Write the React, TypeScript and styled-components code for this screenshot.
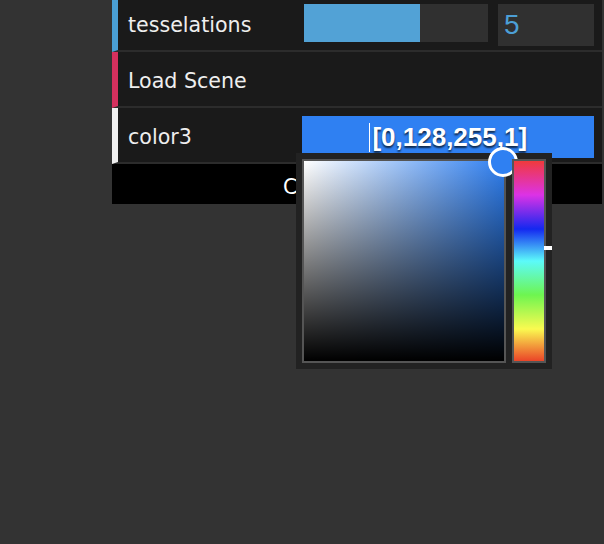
import React from "react";
import styled, { createGlobalStyle } from "styled-components";

const Global = createGlobalStyle`
  html, body { margin: 0; padding: 0; }
  body {
    background: #333333;
    min-height: 544px;
    overflow: hidden;
    font-family: "DejaVu Sans", "Liberation Sans", sans-serif;
  }
`;

const Panel = styled.div`
  margin-left: 112px;
  margin-top: -4px;
  width: 490px;
  background: #1a1a1a;
`;

const Row = styled.div<{ $accent: string }>`
  display: flex;
  align-items: flex-start;
  height: 54px;
  padding: 0 8px 0 10px;
  border-left: 6px solid ${(p) => p.$accent};
  border-bottom: 2px solid #2c2c2c;
`;

const Label = styled.div`
  flex: none;
  width: 174px;
  padding-top: 4px;
  line-height: 50px;
  font-size: 20.6px;
  color: #eeeeee;
  white-space: nowrap;
`;

const Control = styled.div`
  position: relative;
  flex: none;
  width: 292px;
  padding-top: 8px;
  display: flex;
  align-items: flex-start;
  gap: 10px;
`;

const Slider = styled.div`
  margin-left: 2px;
  width: 184px;
  height: 38px;
  background: #303030;
`;

const SliderFill = styled.div`
  height: 100%;
  background: #52a2d6;
`;

const NumberBox = styled.div`
  box-sizing: border-box;
  width: 96px;
  height: 42px;
  padding-left: 6px;
  background: #303030;
  color: #4c9fd6;
  font-family: "Liberation Sans", Arial, sans-serif;
  font-size: 28px;
  line-height: 42px;
`;

const ColorField = styled.div`
  width: 292px;
  height: 42px;
  background: #2f80f2;
  color: #ffffff;
  font-family: "Liberation Sans", Arial, sans-serif;
  font-size: 26px;
  font-weight: bold;
  line-height: 42px;
  text-align: center;
  text-shadow: rgba(0, 0, 0, 0.7) 0 2px 2px;
  white-space: nowrap;
`;

const Caret = styled.span`
  display: inline-block;
  width: 1.5px;
  height: 29px;
  margin-right: 2px;
  background: #ffffff;
  vertical-align: -6px;
`;

const Picker = styled.div`
  position: absolute;
  left: -6px;
  top: 45px;
  z-index: 10;
  display: flex;
  gap: 6px;
  padding: 6px;
  background: #222222;
`;

const SatField = styled.div`
  position: relative;
  width: 200px;
  height: 200px;
  border: 2px solid #555555;
  background: linear-gradient(to bottom, rgba(0, 0, 0, 0) 0%, #000000 100%),
    linear-gradient(to right, #ffffff 0%, #2f7ff0 100%);
`;

const FieldKnob = styled.div`
  position: absolute;
  box-sizing: border-box;
  left: 184px;
  top: -14px;
  width: 30px;
  height: 30px;
  border: 3px solid #ffffff;
  border-radius: 50%;
  background: #2f80f2;
`;

const HueBar = styled.div`
  position: relative;
  width: 30px;
  height: 200px;
  border: 2px solid #555555;
  background: linear-gradient(
    to bottom,
    #f03a3c 0%,
    #dc32e6 17%,
    #1428f0 34%,
    #5cfafa 50%,
    #6ef550 67%,
    #fafa50 84%,
    #ea4428 100%
  );
`;

const HueKnob = styled.div`
  position: absolute;
  left: 30px;
  top: 85px;
  width: 8px;
  height: 4px;
  background: #ffffff;
`;

const CloseBar = styled.div`
  box-sizing: border-box;
  height: 40px;
  padding-top: 6px;
  line-height: 34px;
  background: #000000;
  color: #ffffff;
  font-size: 20.6px;
  text-align: center;
`;

export default function App() {
  return (
    <>
      <Global />
      <Panel>
        <Row $accent="#4a9fd5">
          <Label>tesselations</Label>
          <Control>
            <Slider>
              <SliderFill style={{ width: "63%" }} />
            </Slider>
            <NumberBox>5</NumberBox>
          </Control>
        </Row>
        <Row $accent="#d5305e">
          <Label>Load Scene</Label>
        </Row>
        <Row $accent="#efefef">
          <Label>color3</Label>
          <Control>
            <ColorField>
              <Caret />
              [0,128,255,1]
            </ColorField>
            <Picker>
              <SatField>
                <FieldKnob />
              </SatField>
              <HueBar>
                <HueKnob />
              </HueBar>
            </Picker>
          </Control>
        </Row>
        <CloseBar>Close Controls</CloseBar>
      </Panel>
    </>
  );
}
